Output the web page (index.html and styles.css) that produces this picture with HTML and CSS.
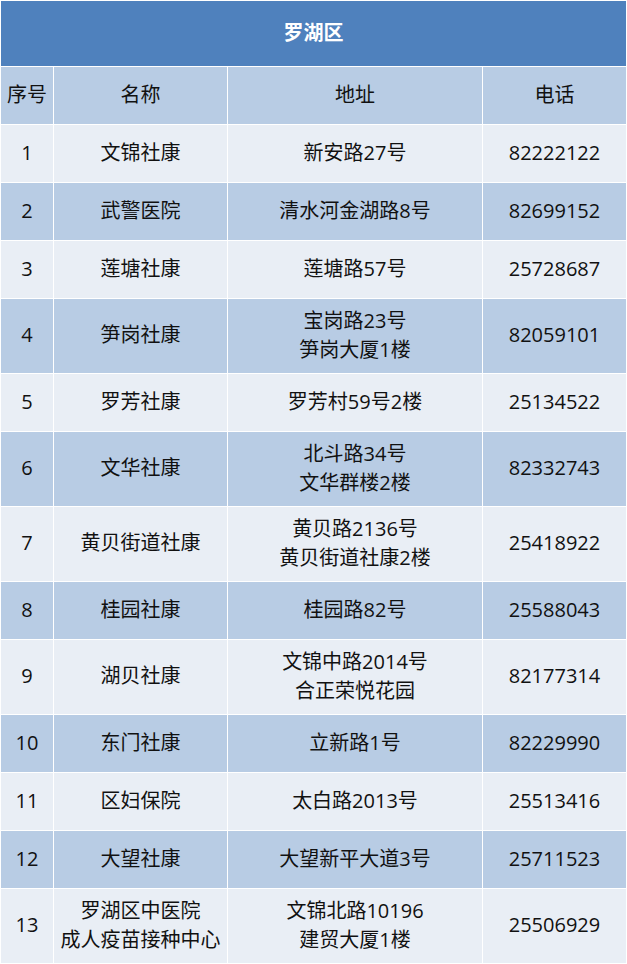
FILE: index.html
```html
<!DOCTYPE html>
<html lang="zh-CN">
<head>
<meta charset="utf-8">
<title>罗湖区</title>
<link rel="stylesheet" href="styles.css">
</head>
<body>
<table class="sheet">
  <colgroup>
    <col class="c1"><col class="c2"><col class="c3"><col class="c4">
  </colgroup>
  <thead>
    <tr><th class="title" colspan="4">罗湖区</th></tr>
    <tr class="head"><th>序号</th><th>名称</th><th>地址</th><th>电话</th></tr>
  </thead>
  <tbody>
    <tr class="light"><td>1</td><td>文锦社康</td><td>新安路27号</td><td>82222122</td></tr>
    <tr class="dark"><td>2</td><td>武警医院</td><td>清水河金湖路8号</td><td>82699152</td></tr>
    <tr class="light"><td>3</td><td>莲塘社康</td><td>莲塘路57号</td><td>25728687</td></tr>
    <tr class="dark tall"><td>4</td><td>笋岗社康</td><td>宝岗路23号<br>笋岗大厦1楼</td><td>82059101</td></tr>
    <tr class="light"><td>5</td><td>罗芳社康</td><td>罗芳村59号2楼</td><td>25134522</td></tr>
    <tr class="dark tall"><td>6</td><td>文华社康</td><td>北斗路34号<br>文华群楼2楼</td><td>82332743</td></tr>
    <tr class="light tall"><td>7</td><td>黄贝街道社康</td><td>黄贝路2136号<br>黄贝街道社康2楼</td><td>25418922</td></tr>
    <tr class="dark"><td>8</td><td>桂园社康</td><td>桂园路82号</td><td>25588043</td></tr>
    <tr class="light tall"><td>9</td><td>湖贝社康</td><td>文锦中路2014号<br>合正荣悦花园</td><td>82177314</td></tr>
    <tr class="dark"><td>10</td><td>东门社康</td><td>立新路1号</td><td>82229990</td></tr>
    <tr class="light"><td>11</td><td>区妇保院</td><td>太白路2013号</td><td>25513416</td></tr>
    <tr class="dark"><td>12</td><td>大望社康</td><td>大望新平大道3号</td><td>25711523</td></tr>
    <tr class="light tall"><td>13</td><td>罗湖区中医院<br>成人疫苗接种中心</td><td>文锦北路10196<br>建贸大厦1楼</td><td>25506929</td></tr>
  </tbody>
</table>
</body>
</html>
```
FILE: styles.css
```css
html, body {
  margin: 0;
  padding: 0;
  background: #ffffff;
}
.sheet {
  border-collapse: separate;
  border-spacing: 1px;
  background: #ffffff;
  width: 627px;
  table-layout: fixed;
  font-family: "Open Sans", "Noto Sans CJK SC", sans-serif;
  font-size: 20px;
  line-height: 29px;
  color: #111111;
}
.c1 { width: 52px; }
.c2 { width: 173px; }
.c3 { width: 254px; }
.c4 { width: 143px; }
.sheet th, .sheet td {
  padding: 0 0 3px 0;
  text-align: center;
  vertical-align: middle;
  height: 54px;
  font-weight: normal;
  white-space: nowrap;
}
.sheet th.title {
  height: 62px;
  background: #4f81bd;
  color: #ffffff;
  font-weight: bold;
  font-size: 20px;
}
.head th { background: #b8cce4; }
.dark td { background: #b8cce4; }
.light td { background: #e9eef5; }
.tall td { height: 71px; }
```
